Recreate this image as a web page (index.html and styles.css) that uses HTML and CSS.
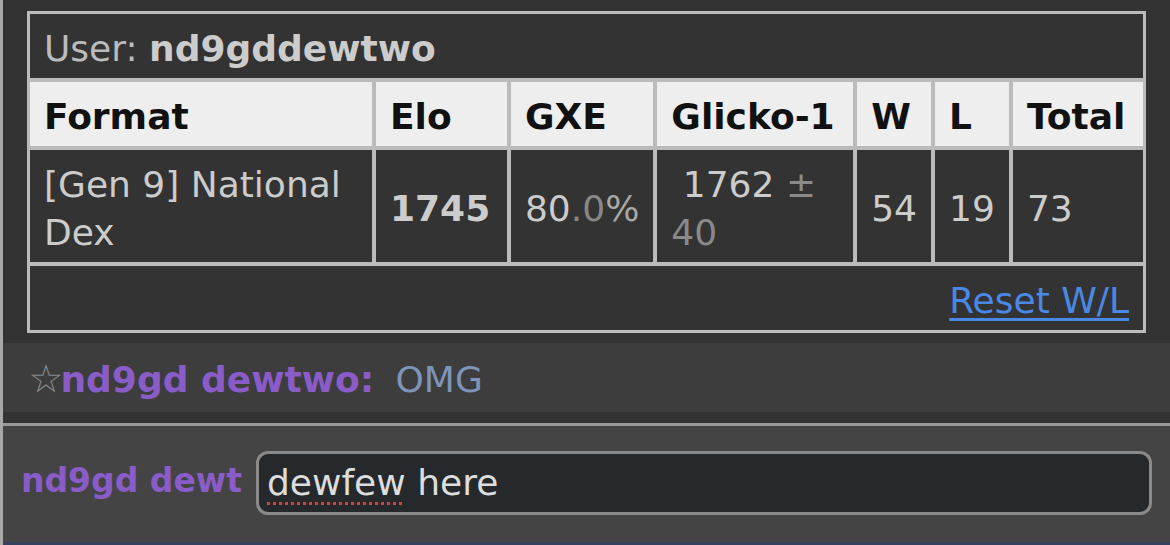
FILE: index.html
```html
<!DOCTYPE html>
<html lang="en">
<head>
<meta charset="utf-8">
<title>Rank</title>
<link rel="stylesheet" href="styles.css">
</head>
<body>
<div class="app">
  <div class="log">
    <div class="rank-wrap">
      <table class="rank">
        <tr><td class="user" colspan="7">User: <strong>nd9gddewtwo</strong></td></tr>
        <tr>
          <th class="c-format">Format</th>
          <th class="c-elo">Elo</th>
          <th class="c-gxe">GXE</th>
          <th class="c-glicko">Glicko-1</th>
          <th class="c-w">W</th>
          <th class="c-l">L</th>
          <th class="c-total">Total</th>
        </tr>
        <tr>
          <td>[Gen 9] National Dex</td>
          <td><strong>1745</strong></td>
          <td>80<span class="dec">.0</span><span class="pct">%</span></td>
          <td>&nbsp;1762 <span class="dev">±</span> <span class="dev">40</span></td>
          <td>54</td>
          <td>19</td>
          <td>73</td>
        </tr>
        <tr><td class="reset" colspan="7"><a href="#">Reset W/L</a></td></tr>
      </table>
    </div>
    <div class="msg"><span class="star">☆</span><strong class="name">nd9gd dewtwo:</strong> <em class="text">OMG</em></div>
    <div class="gap"></div>
  </div>
  <div class="composer">
    <div class="label">nd9gd dewt</div>
    <div class="textbox"><span class="misspelt">dewfew</span> here</div>
  </div>
</div>
</body>
</html>
```
FILE: styles.css
```css
* { box-sizing: border-box; }
html, body { margin: 0; padding: 0; }
body {
  width: 1170px;
  height: 545px;
  overflow: hidden;
  background: #333;
  font-family: "DejaVu Sans", Verdana, sans-serif;
  font-size: 36px;
  line-height: 48px;
  color: #ccc;
}
.app {
  height: 545px;
  border-left: 3px solid #a8a8a8;
  display: flex;
  flex-direction: column;
}
.log { background: #333; }
.rank-wrap { padding: 11px 24px 10px; }
.rank {
  width: 100%;
  border: 1px solid #bbb;
  border-collapse: separate;
  border-spacing: 0;
}
.rank th, .rank td {
  border: 2px solid #bbb;
  padding: 11px 14px 5px;
  text-align: left;
  vertical-align: middle;
}
.rank th { background: #eee; color: #111; font-weight: bold; }
.rank td { background: #333; color: #ccc; }
.rank td.user { color: #bbb; }
.rank td.user strong { color: #ccc; }
.c-format { width: 347px; }
.c-elo { width: 135px; }
.c-gxe { width: 146px; }
.c-glicko { width: 200px; }
.c-w { width: 77px; }
.c-l { width: 78px; }
.c-total { width: 134px; }
.dec { color: #888; }
.pct { color: #a8a8a8; }
.dev { color: #8a8a8a; }
.rank td.reset { text-align: right; }
.reset a {
  color: #4a88e6;
  text-decoration: underline;
  text-decoration-thickness: 3px;
  text-underline-offset: 5px;
}
.msg {
  background: #3d3d3d;
  height: 69px;
  padding: 12px 0 9px 25.5px;
  white-space: nowrap;
}
.star { color: #888; font-size: 39px; margin-right: -3px; }
.name { color: #8a5cc8; font-weight: bold; }
.text { color: #7d93b8; font-style: normal; margin-left: 10px; }
.gap { height: 11px; background: #333; }
.composer {
  flex: 1;
  background: #444;
  border-top: 3px solid #9a9a9a;
  border-bottom: 3px solid #35405c;
  display: flex;
  align-items: flex-start;
  padding: 25px 18px 0 18px;
}
.label {
  flex: 0 0 235px;
  margin-top: 6px;
  white-space: nowrap;
  font-size: 33px;
  font-weight: bold;
  color: #8a5cc8;
}
.textbox {
  flex: 1;
  height: 64px;
  border: 3px solid #8a8a8a;
  border-radius: 12px;
  background: #26292c;
  padding: 5px 8px;
  color: #ddd;
  white-space: nowrap;
}
.misspelt {
  text-decoration: underline dotted #d0463a;
  text-decoration-thickness: 3px;
  text-underline-offset: 7px;
}
```
